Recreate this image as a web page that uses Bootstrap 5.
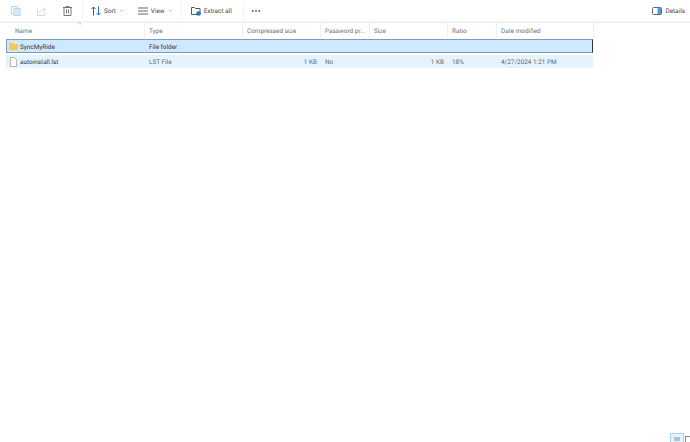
<!DOCTYPE html>
<html lang="en">
<head>
<meta charset="utf-8">
<title>Archive</title>
<link href="https://cdn.jsdelivr.net/npm/bootstrap@5.3.0/dist/css/bootstrap.min.css" rel="stylesheet">
<style>
html,body{height:442px;overflow:hidden;background:#fff}
body{font-family:Roboto,"Open Sans",sans-serif;font-size:6.4px;line-height:1;color:#444;text-rendering:geometricPrecision}
.shell{width:690px;height:442px}
.tools{height:21px;color:#444}
.tools svg{display:block;flex:none}
.sepv{width:1px;height:19px;background:#f3f3f3;flex:none}
.tlabel{flex:none;white-space:nowrap;padding-top:1px}
.rule{height:2px;background:#f1f1f1}
.cols{display:grid;grid-template-columns:139px 98px 78px 49px 78px 49px 97px;width:588px;margin-left:6px}
.head{height:15px;color:#707070;position:relative}
.head>div{border-right:1px solid #eee;padding-left:4px;padding-top:1px;display:flex;align-items:center;white-space:nowrap}
.head>div:first-child{padding-left:9px}
.caret{position:absolute;left:71px;top:-1px}
.rw{align-items:center}
.rw>div{padding-left:4px;white-space:nowrap;padding-top:2px}
.rw>div:first-child{padding-left:3px;padding-top:0;display:flex;align-items:center;gap:2px;color:#333}
.rw>div:first-child span{padding-top:2px}
.sel{background:#cde8ff;border:1px solid #7f9bb5;border-right-color:#26384a;margin-top:1px;height:14px;width:587px;color:#333;grid-template-columns:138px 98px 78px 49px 78px 49px 95px}
.alt{background:#e5f3ff;height:13px;margin-top:2px;width:587px;color:#666}
.num{text-align:right;padding-right:4px}
.foot svg{display:block}
</style>
</head>
<body>
<div class="shell d-flex flex-column">
  <div class="tools d-flex align-items-center">
    <svg style="margin-left:11px" width="10" height="10" viewBox="0 0 10 10" fill="none" stroke="#bdd2e4" stroke-width="1"><rect x=".5" y=".5" width="6" height="7"/><rect x="3" y="2.500" width="6" height="7" fill="#dceaf6"/></svg>
    <svg style="margin-left:16px" width="10" height="10" viewBox="0 0 10 10" fill="none" stroke="#ccdbe8" stroke-width="1"><path d="M.5 3.500v6h7v-3"/><path d="M2.500 7c.5-2.500 2.500-3.500 5-3.500M6 1.500l2.500 2-2.500 2"/></svg>
    <svg style="margin-left:16px" width="9" height="10" viewBox="0 0 9 10" fill="none" stroke="#666" stroke-width=".9"><path d="M0 1.500h9M3 1.500V.5h3v1M1 1.500v8h7v-8M3.500 3.500v4M5.500 3.500v4"/></svg>
    <div class="sepv" style="margin-left:10px"></div>
    <svg style="margin-left:8px" width="10" height="10" viewBox="0 0 10 10" fill="none" stroke-width="1"><path d="M2.500 9.500V1M.5 3l2-2 2 2" stroke="#555"/><path d="M7.500 .5V9M5.500 7l2 2 2-2" stroke="#1a78c9"/></svg>
    <span class="tlabel" style="margin-left:3px">Sort</span>
    <svg style="margin-left:3px" width="5" height="4" viewBox="0 0 5 4" fill="none" stroke="#aaa" stroke-width=".7"><path d="M1 1l1.500 1.500L4 1"/></svg>
    <svg style="margin-left:14px" width="10" height="8" viewBox="0 0 10 8" fill="none" stroke="#666" stroke-width="1"><path d="M0 1h10M0 4h10M0 7h10"/></svg>
    <span class="tlabel" style="margin-left:3px">View</span>
    <svg style="margin-left:3px" width="5" height="4" viewBox="0 0 5 4" fill="none" stroke="#aaa" stroke-width=".7"><path d="M1 1l1.500 1.500L4 1"/></svg>
    <div class="sepv" style="margin-left:8px"></div>
    <svg style="margin-left:9px" width="10" height="10" viewBox="0 0 10 10" fill="none"><path d="M.5 1.500h3l1 1h4.500v6H.5z" stroke="#555"/><circle cx="7.500" cy="7.500" r="2.300" fill="#1a78c9"/></svg>
    <span class="tlabel" style="margin-left:3px">Extract all</span>
    <div class="sepv" style="margin-left:11px"></div>
    <svg style="margin-left:8px" width="8" height="2" viewBox="0 0 8 2" fill="#222"><rect width="1.400" height="1.400" y=".3"/><rect x="3.300" width="1.400" height="1.400" y=".3"/><rect x="6.600" width="1.400" height="1.400" y=".3"/></svg>
    <svg class="ms-auto" width="10" height="8" viewBox="0 0 10 8" fill="none"><rect x=".5" y=".5" width="9" height="7" rx="1" stroke="#666"/><rect x="5.500" y="1" width="3.500" height="6" fill="#4a9ee0"/></svg>
    <span class="tlabel" style="margin-left:3px;margin-right:5px">Details</span>
  </div>
  <div class="rule"></div>
  <div class="cols head">
    <div>Name</div><div>Type</div><div>Compressed size</div><div>Password pr...</div><div>Size</div><div>Ratio</div><div>Date modified</div>
    <svg class="caret" width="5" height="3" viewBox="0 0 5 3" fill="none" stroke="#aaa" stroke-width=".7"><path d="M.5 2.500L2.500 .5l2 2"/></svg>
  </div>
  <div class="cols rw sel">
    <div style="padding-left:2px"><svg width="9" height="7" viewBox="0 0 9 7"><path d="M0 0h3.500l1 1H9v6H0z" fill="#f6c94e"/></svg><span>SyncMyRide</span></div><div>File folder</div><div></div><div></div><div></div><div></div><div></div>
  </div>
  <div class="cols rw alt">
    <div style="padding-left:4px"><svg width="7" height="10" viewBox="0 0 7 10" fill="#fff" stroke="#999" stroke-width=".7"><path d="M.5 .5h4l2 2v7H.5z"/></svg><span style="margin-left:1px">autoinstall.lst</span></div><div>LST File</div><div class="num">1 KB</div><div>No</div><div class="num">1 KB</div><div>18%</div><div>4/27/2024 1:21 PM</div>
  </div>
  <div class="foot mt-auto d-flex justify-content-end" style="height:9px">
    <svg width="20" height="9" viewBox="0 0 20 9" fill="none"><rect x=".5" y=".5" width="13" height="12" fill="#e5f3ff" stroke="#a8d2f2"/><path d="M4 5h6M4 7h6" stroke="#888"/><rect x="15.500" y="3.500" width="6" height="8" stroke="#888"/></svg>
  </div>
</div>
<script src="https://cdn.jsdelivr.net/npm/bootstrap@5.3.0/dist/js/bootstrap.bundle.min.js"></script>
</body>
</html>
